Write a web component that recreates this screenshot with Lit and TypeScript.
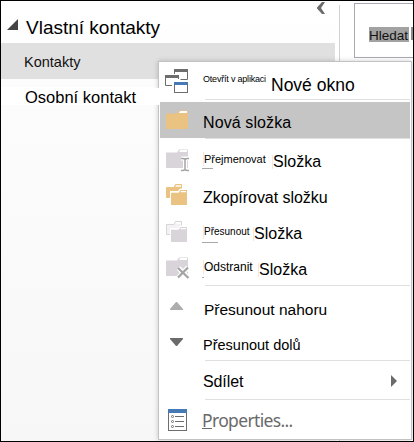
import { LitElement, html, css, svg, nothing } from "lit";
import { customElement } from "lit/decorators.js";

const folder = (fill: string) => svg`
  <path fill=${fill} d="M0 3.5H11L13 0.5H22V19H0Z"/>
  <path fill="#fff" d="M14.3 1H21V3H13Z"/>`;

const folders = (back: string, front: string, edge: string) => svg`
  <path fill=${back} stroke=${edge} d="M.5 3.5H8L9.5 .5H15.5V13.5H.5Z"/>
  <path fill="#fff" d="M10 1.3H15V2.7H9.3Z"/>
  <path fill="#fff" d="M4 7H12L14 4.5H22V21H4Z"/>
  <path fill=${front} d="M5 8.7H12.5L14.5 6H21V21H5Z"/>
  <path fill="#fff" d="M15 7H20V8.2H14.3Z"/>`;

const icons: Record<string, unknown> = {
  windows: svg`
    <path fill="none" stroke="#6d6d6d" d="M9.5 5V1H22.5V10.5H15.5M7 16.5H.5V7H13.5V10"/>
    <path fill="#6d6d6d" d="M9 0H23V3H9ZM0 6H14V9H0Z"/>
    <rect x="8" y="12" width="16" height="13" fill="#fff"/>
    <rect x="9.5" y="13.5" width="13" height="10" fill="#fff" stroke="#6d6d6d"/>
    <path fill="#457ab5" d="M9 13H23V16H9Z"/>`,
  folder: folder("#eac282"),
  rename: svg`${folder("#d9d4d9")}
    <path fill="none" stroke="#fff" stroke-width="4" d="M15 9.5H23M19 10V21M15 21.5H23"/>
    <path fill="none" stroke="#a4a4a4" stroke-width="1.5" d="M15 9.6Q18 9.2 19 10.5Q20 9.2 23 9.6M15 21.4Q18 21.8 19 20.5Q20 21.8 23 21.4M19 10.5V20.5"/>`,
  copy: folders("#eac282", "#eac282", "#eac282"),
  move: folders("#f4f1f4", "#d9d4d9", "#d9d4d9"),
  remove: svg`${folder("#d9d4d9")}
    <path fill="none" stroke="#fff" stroke-width="5" d="M12.5 11L22 20.5M22 10.5L12.5 20.5"/>
    <path fill="none" stroke="#a4a4a4" stroke-width="2.3" d="M12 11L22.5 21M22 10.5L12 20.5"/>`,
  up: svg`<path fill="#adadad" d="M6 0H7L13 7V8H0V7Z"/>`,
  down: svg`<path fill="#6b6b6b" d="M0 0H13V1L7 8H6L0 1Z"/>`,
  properties: svg`
    <rect x=".5" y=".5" width="18" height="21" fill="#fff" stroke="#6d6d6d"/>
    <path fill="#457ab5" d="M0 0H19V4H0Z"/>
    <path stroke="#6d6d6d" d="M7 7.5H16M7 12.5H16M7 17.5H16"/>
    <g fill="none" stroke="#6d6d6d"><circle cx="4.5" cy="7.5" r="1"/><circle cx="4.5" cy="12.5" r="1"/><circle cx="4.5" cy="17.5" r="1"/></g>`,
};

interface Item {
  id: string;
  icon?: string;
  parts: { cls: string; text: string }[];
  rule?: boolean;
  submenu?: boolean;
}

const items: Item[] = [
  { id: "open", icon: "windows", parts: [{ cls: "open-a", text: "Otevřít v aplikaci" }, { cls: "open-b", text: "Nové okno" }], rule: true },
  { id: "new", icon: "folder", parts: [{ cls: "new-a", text: "Nová složka" }], rule: true },
  { id: "rename", icon: "rename", parts: [{ cls: "rename-a key", text: "Přejmenovat" }, { cls: "rename-b edge", text: "Složka" }] },
  { id: "copy", icon: "copy", parts: [{ cls: "copy-a", text: "Zkopírovat složku" }] },
  { id: "move", icon: "move", parts: [{ cls: "move-a key", text: "Přesunout" }, { cls: "move-b edge", text: "Složka" }] },
  { id: "remove", icon: "remove", parts: [{ cls: "remove-a key", text: "Odstranit" }, { cls: "remove-b edge", text: "Složka" }], rule: true },
  { id: "up", icon: "up", parts: [{ cls: "up-a", text: "Přesunout nahoru" }] },
  { id: "down", icon: "down", parts: [{ cls: "down-a", text: "Přesunout dolů" }], rule: true },
  { id: "share", parts: [{ cls: "share-a", text: "Sdílet" }], rule: true, submenu: true },
  { id: "props", icon: "properties", parts: [{ cls: "props-a", text: "Properties..." }] },
];

@customElement("context-menu")
export class ContextMenu extends LitElement {
  static styles = css`
    :host {
      display: block;
      box-sizing: border-box;
      border: 1px solid #c3c3c6;
      background: #fff;
      box-shadow: 0 0 5px rgba(0, 0, 0, 0.2);
      color: #000;
    }
    .item { display: flex; height: 36px; margin-left: 1px; }
    .item.open { height: 37px; }
    .item.new { background: #c5c5c5; margin-right: 1px; }
    .item.remove { height: 35px; }
    .icon { width: 43px; box-sizing: border-box; flex: none; display: flex; }
    svg { display: block; overflow: visible; width: 24px; height: 24px; flex: none; }
    .icon-open { padding: 7px 0 0 5px; }
    .icon-new { padding: 8px 0 0 6px; }
    .icon-rename { padding: 7px 0 0 6px; }
    .icon-copy { padding: 6px 0 0 6px; }
    .icon-move { padding: 7px 0 0 6px; }
    .icon-remove { padding: 7px 0 0 6px; }
    .icon-up, .icon-down { padding: 14px 0 0 10px; }
    .icon-props { padding: 7px 0 0 8px; }
    .label { line-height: 20px; white-space: pre; height: 20px; flex: none; }
    .rule { height: 1px; background: #dedfe1; margin: 0 1px 2px 46px; }
    .rule.after-new { margin-bottom: 3px; }
    .key, .edge { position: relative; }
    .key::before, .edge::before {
      content: "";
      position: absolute;
      left: -1px;
      top: 3px;
      width: 1px;
      height: 14px;
      background: #fde6cf;
    }
    .key::after {
      content: "";
      position: absolute;
      left: -2px;
      height: 1px;
      background: #a8a8a8;
    }
    .rename-a::after { top: 19px; width: 11px; }
    .move-a::after { top: 20px; width: 16px; }
    .remove-a::after { top: 20px; width: 2px; }
    .open-a { font-size: 9px; width: 68px; margin-top: 7px; letter-spacing: -0.2px; }
    .open-b { font-size: 17.5px; margin-top: 13px; }
    .new-a { font-size: 16px; margin-top: 11px; letter-spacing: 0.1px; }
    .rename-a { font-size: 11px; margin: 7px 0 0 1px; width: 69px; }
    .rename-b { font-size: 16px; margin-top: 10px; }
    .copy-a { font-size: 16px; margin-top: 10px; letter-spacing: -0.05px; }
    .move-a { font-size: 10px; margin: 8px 0 0 1px; width: 50px; }
    .move-b { font-size: 16px; margin-top: 10px; }
    .remove-a { font-size: 12px; margin: 7px 0 0 1px; width: 55px; }
    .remove-b { font-size: 16px; margin-top: 10px; }
    .up-a { font-size: 15.5px; margin: 12px 0 0 1px; }
    .down-a { font-size: 14.5px; margin-top: 11px; }
    .share-a { font-size: 16px; margin-top: 9px; letter-spacing: -0.1px; }
    .props-a { font: 17.5px/20px "Noto Sans", sans-serif; letter-spacing: -0.65px; margin-top: 8px; margin-left: -1px; color: #6a6a6a; }
    .props-a::first-letter { text-decoration: underline; }
    .arrow { margin: 12px 14px 0 auto; width: 6px; height: 12px; }
  `;

  render() {
    return items.map((item) => html`
      <div class="item ${item.id}">
        <span class="icon icon-${item.id}">${item.icon ? html`<svg viewBox="0 0 24 24">${icons[item.icon]}</svg>` : nothing}</span>
        ${item.parts.map((p) => html`<span class="label ${p.cls}">${p.text}</span>`)}
        ${item.submenu ? html`<svg class="arrow" viewBox="0 0 6 12"><path fill="#6b6b6b" d="M0 0L6 6L0 12Z"/></svg>` : nothing}
      </div>
      ${item.rule ? html`<div class="rule after-${item.id}"></div>` : nothing}`);
  }
}

@customElement("app-root")
export class AppRoot extends LitElement {
  static styles = css`
    :host {
      display: block;
      position: relative;
      box-sizing: border-box;
      width: 414px;
      height: 442px;
      border: 1px solid #000;
      background: #fff;
      overflow: hidden;
      font-family: "Liberation Sans", Arial, sans-serif;
      color: #111;
    }
    .layout { display: flex; height: 100%; }
    .pane { width: 334px; flex: none; background: linear-gradient(#fff, #fcfcfc 20%, #f7f7f7); }
    .head { display: flex; height: 42px; color: #000; }
    .tri { width: 11px; height: 11px; margin: 18px 8px 0 6px; display: block; flex: none; }
    .title { font-size: 19px; line-height: 20px; margin-top: 17px; width: 291px; flex: none; }
    .chevron { width: 8px; height: 12px; display: block; margin-top: 1px; flex: none; }
    .row { height: 36px; box-sizing: border-box; padding: 9px 0 0 23px; background: #e0e0e0; font-size: 14.5px; line-height: 20px; }
    .contact { display: block; margin-top: 8px; width: 160px; height: 18px; box-sizing: border-box; padding-left: 24px; background: #fff; font-size: 16.5px; line-height: 21px; color: #000; }
    .divider { width: 1px; flex: none; margin: 4px 0 0 4px; background: #d2d3d7; }
    .search { box-sizing: border-box; margin: 2px 0 0 14px; width: 70px; height: 55px; flex: none; border: 1px solid #a8a9b1; padding: 23px 0 0 14px; display: flex; gap: 2px; font-size: 13.5px; line-height: 17px; }
    mark { display: block; height: 15px; width: 40px; flex: none; background: #a2a2a2; color: #111; }
    .caret { width: 4px; height: 13px; background: #8d8d8d; }
    context-menu { position: absolute; left: 157px; top: 60px; width: 254px; height: 379px; }
    .patch { position: absolute; left: 150px; top: 87px; width: 9px; height: 17px; background: #fff; }
  `;

  render() {
    return html`
      <div class="layout">
        <div class="pane">
          <div class="head">
            <svg class="tri" viewBox="0 0 11 11"><path fill="#444" d="M11 0V11H0Z"/></svg>
            <span class="title">Vlastní kontakty</span>
            <svg class="chevron" viewBox="0 0 8 12"><path fill="#6c6c6c" d="M5 0H8L4 6L8 12H5L0 6.5V5.5Z"/></svg>
          </div>
          <div class="row">Kontakty</div>
          <span class="contact">Osobní kontakt</span>
        </div>
        <div class="divider"></div>
        <div class="search"><mark>Hledat</mark><span class="caret"></span></div>
      </div>
      <context-menu></context-menu>
      <div class="patch"></div>`;
  }
}
